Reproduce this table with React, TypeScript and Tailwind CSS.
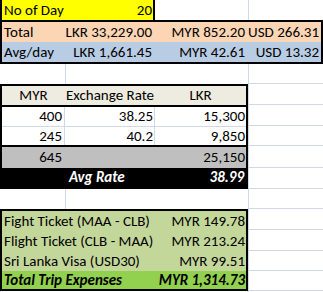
const grid = 'border-[#D0D7E5]';

function DCell({ h, last = false }: { h: string; last?: boolean }) {
  return <div className={`${h} border-l ${grid} ${last ? '' : 'border-b'}`} />;
}

export default function App() {
  return (
    <div className="w-[323px] h-[292px] overflow-hidden whitespace-nowrap bg-white text-black text-[15px] leading-none font-['Carlito','Lato',sans-serif]">
      {/* row 1 */}
      <div className="flex h-[20px]">
        <div className="flex w-[155px] items-center justify-between border-x-2 border-black bg-[#FFFF00] pl-[2px] pr-[1px]">
          <span>No of Day</span>
          <span>20</span>
        </div>
        <div className="w-[93px]" />
        <div className={`flex-1 border-l ${grid}`} />
      </div>

      {/* totals */}
      <div className="h-[44px] border-2 border-black">
        <div className="grid h-[20px] grid-cols-[63px_90px_93px_1fr] items-center bg-[#FCD5B4]">
          <span className="pl-[2px]">Total</span>
          <span className="pr-[3px] text-right">LKR 33,229.00</span>
          <span className="pr-[3px] text-right">MYR 852.20</span>
          <span className="pr-[2px] text-right">USD 266.31</span>
        </div>
        <div className="grid h-[20px] grid-cols-[63px_90px_93px_1fr] items-center bg-[#B8CCE4]">
          <span className="pl-[2px]">Avg/day</span>
          <span className="pr-[3px] text-right">LKR 1,661.45</span>
          <span className="pr-[3px] text-right">MYR 42.61</span>
          <span className="pr-[2px] text-right">USD 13.32</span>
        </div>
      </div>

      {/* blank row */}
      <div className="flex h-[20px]">
        <div className={`w-[66px] border-r ${grid}`} />
        <div className="w-[182px]" />
        <div className={`flex-1 border-b border-l ${grid}`} />
      </div>

      {/* exchange table */}
      <div className="flex">
        <div className="flex h-[105px] w-[248px] flex-col border-2 border-black">
          <div className="grid h-[21px] grid-cols-[63px_90px_1fr] items-center border-b-2 border-black bg-[#EEECE1] text-center">
            <span>MYR</span>
            <span>Exchange Rate</span>
            <span>LKR</span>
          </div>
          <div className={`grid h-[20px] grid-cols-[63px_90px_1fr] border-b ${grid}`}>
            <span className={`flex items-center justify-end border-r pr-[2px] ${grid}`}>400</span>
            <span className={`flex items-center justify-end border-r pr-[1px] ${grid}`}>38.25</span>
            <span className="flex items-center justify-end pr-[1px]">15,300</span>
          </div>
          <div className="grid h-[20px] grid-cols-[63px_90px_1fr] border-b-2 border-black">
            <span className={`flex items-center justify-end border-r pr-[2px] ${grid}`}>245</span>
            <span className={`flex items-center justify-end border-r pr-[1px] ${grid}`}>40.2</span>
            <span className="flex items-center justify-end pr-[1px]">9,850</span>
          </div>
          <div className="grid h-[21px] grid-cols-[63px_90px_1fr] items-center bg-[#BFBFBF]">
            <span className="pr-[3px] text-right">645</span>
            <span />
            <span className="pr-[1px] text-right">25,150</span>
          </div>
          <div className="grid h-[19px] grid-cols-[63px_90px_1fr] items-center bg-black font-bold italic text-white">
            <span />
            <span className="pl-[4px]">Avg Rate</span>
            <span className="pr-[2px] text-right">38.99</span>
          </div>
        </div>
        <div className="flex flex-1 flex-col">
          <DCell h="h-[21px]" />
          <DCell h="h-[21px]" />
          <DCell h="h-[20px]" />
          <DCell h="h-[22px]" />
          <DCell h="h-[21px]" />
        </div>
      </div>

      {/* blank row */}
      <div className="flex h-[20px]">
        <div className={`w-[66px] border-r ${grid}`} />
        <div className="w-[182px]" />
        <div className={`flex-1 border-b border-l ${grid}`} />
      </div>

      {/* trip expenses */}
      <div className="flex">
        <div className="flex h-[82px] w-[248px] flex-col border-2 border-black">
          <div className="flex h-[20px] items-center justify-between bg-[#C4D79B] pl-[2px] pr-[1px]">
            <span>Fight Ticket (MAA - CLB)</span>
            <span>MYR 149.78</span>
          </div>
          <div className="flex h-[20px] items-center justify-between bg-[#C4D79B] pl-[2px] pr-[1px]">
            <span>Flight Ticket (CLB - MAA)</span>
            <span>MYR 213.24</span>
          </div>
          <div className="flex h-[20px] items-center justify-between bg-[#C4D79B] pl-[2px] pr-[1px]">
            <span>Sri Lanka Visa (USD30)</span>
            <span>MYR 99.51</span>
          </div>
          <div className="flex h-[18px] items-center justify-between bg-[#92D050] pl-[2px] pr-[1px] font-bold italic">
            <span>Total Trip Expenses</span>
            <span>MYR 1,314.73</span>
          </div>
        </div>
        <div className="flex flex-1 flex-col">
          <DCell h="h-[21px]" />
          <DCell h="h-[21px]" />
          <DCell h="h-[20px]" />
          <DCell h="h-[20px]" />
          <DCell h="h-[20px]" last />
        </div>
      </div>
    </div>
  );
}
